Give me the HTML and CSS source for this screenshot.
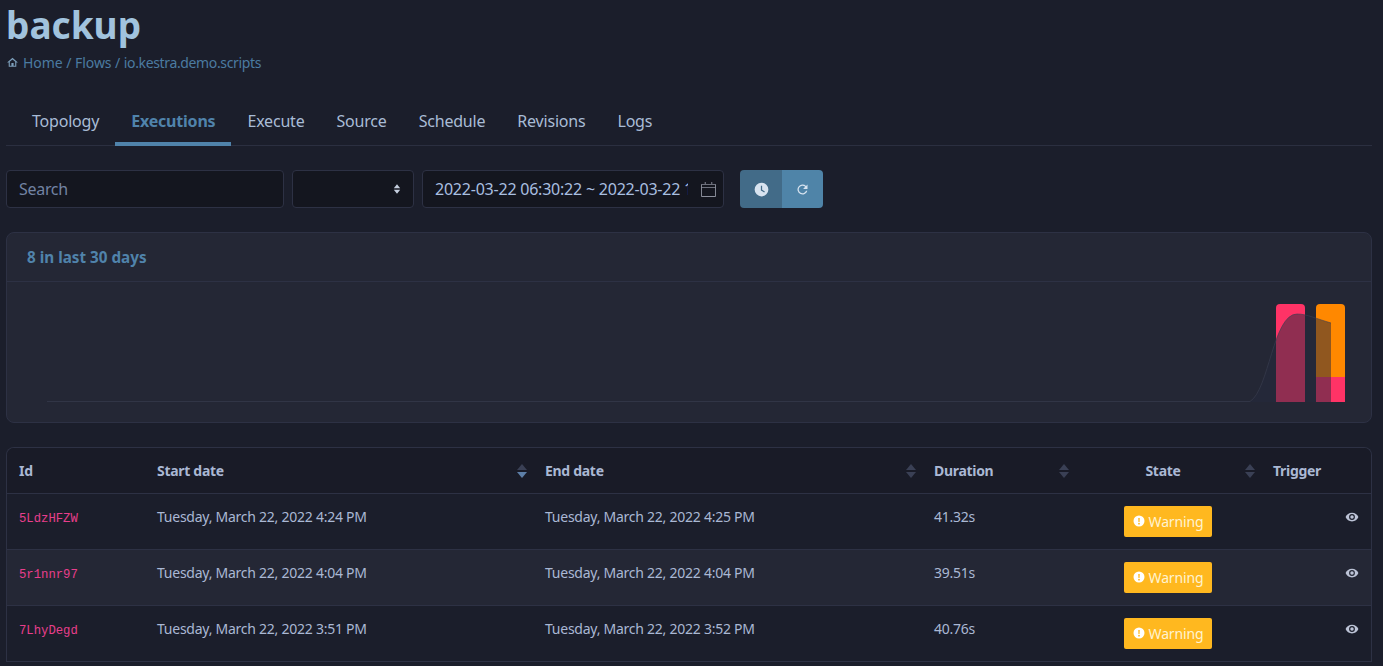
FILE: index.html
```html
<!DOCTYPE html>
<html lang="en">
<head>
    <meta charset="UTF-8">
    <meta name="viewport" content="width=device-width, initial-scale=1.0">
    <title>backup</title>
    <link rel="stylesheet" href="styles.css">
</head>
<body>
<div class="page">
    <h1 class="title">backup</h1>
    <div class="crumbs">
        <svg class="home" viewBox="0 0 24 24"><path d="M12 3 2 12h3v8h14v-8h3L12 3zm-5 15v-7.200l5-4.500 5 4.500V18h-3v-5h-4v5H7z"/></svg>
        <span><a>Home</a> / <a>Flows</a> / <a class="crumb-last">io.kestra.demo.scripts</a></span>
    </div>

    <ul class="tabs">
        <li>Topology</li>
        <li class="active">Executions</li>
        <li>Execute</li>
        <li>Source</li>
        <li>Schedule</li>
        <li>Revisions</li>
        <li>Logs</li>
    </ul>

    <div class="filters">
        <div class="field search">Search</div>
        <div class="field select">
            <svg class="updown" viewBox="0 0 10 14"><path d="M5 1 9 6H1zM5 13 1 8h8z"/></svg>
        </div>
        <div class="field dates">
            <span class="dates-text">2022-03-22 06:30:22 ~ 2022-03-22 16:30:22</span>
            <svg class="cal" viewBox="0 0 16 16"><path d="M4 0h1v2h6V0h1v2h3a1 1 0 0 1 1 1v12a1 1 0 0 1-1 1H1a1 1 0 0 1-1-1V3a1 1 0 0 1 1-1h3V0zM1 3v2.500h14V3H1zm0 3.500V15h14V6.500H1z"/></svg>
        </div>
        <div class="btns">
            <span class="btn dark">
                <svg viewBox="0 0 24 24"><path d="M12 1a11 11 0 1 0 0 22 11 11 0 0 0 0-22zm4.300 15.700L11 13.400V6h2v6.300l4.400 2.700-1.100 1.700z"/></svg>
            </span>
            <span class="btn">
                <svg viewBox="0 0 24 24"><path d="M17.650 6.350A8 8 0 1 0 19.740 14h-2.080a6 6 0 1 1-1.420-6.240L13 11h7V4l-2.350 2.350z"/></svg>
            </span>
        </div>
    </div>

    <div class="card">
        <div class="card-head">8 in last 30 days</div>
        <svg class="chart" viewBox="0 0 1364 140">
            <path d="M1269 26a4 4 0 0 1 4-4h21a4 4 0 0 1 4 4v94h-29z" fill="#ff3366"/>
            <path d="M1309 26a4 4 0 0 1 4-4h21a4 4 0 0 1 4 4v69h-29z" fill="#ff8800"/>
            <rect x="1309" y="95" width="29" height="25" fill="#ff3366"/>
            <path d="M1243 120C1262 108 1266 32 1290 32C1300 32 1310 37 1324 41V120Z" fill="#252a3c" fill-opacity=".51"/>
            <path d="M40 119.500H1243C1262 108 1266 32 1290 32C1300 32 1310 37 1324 41" fill="none" stroke="#3a3f52" stroke-opacity=".6"/>
        </svg>
    </div>

    <div class="table-wrap">
        <table class="runs">
            <colgroup>
                <col class="c-id"><col class="c-start"><col class="c-end"><col class="c-dur"><col class="c-state"><col>
            </colgroup>
            <thead>
                <tr>
                    <th>Id</th>
                    <th>Start date <span class="sort down"></span></th>
                    <th>End date <span class="sort"></span></th>
                    <th>Duration <span class="sort"></span></th>
                    <th class="center"><span class="state-head">State</span> <span class="sort"></span></th>
                    <th>Trigger</th>
                </tr>
            </thead>
            <tbody>
                <tr>
                    <td><code>5LdzHFZW</code></td>
                    <td>Tuesday, March 22, 2022 4:24 PM</td>
                    <td>Tuesday, March 22, 2022 4:25 PM</td>
                    <td>41.32s</td>
                    <td class="center"><span class="badge"><svg viewBox="0 0 24 24"><path d="M12 1a11 11 0 1 0 0 22 11 11 0 0 0 0-22zm-1.500 5h3l-.4 8h-2.200l-.4-8zm1.500 9.500a1.800 1.800 0 1 1 0 3.600 1.800 1.800 0 0 1 0-3.600z"/></svg>Warning</span></td>
                    <td class="right"><svg class="eye" viewBox="0 0 24 24"><path d="M12 4.500C7 4.500 2.700 7.600 1 12c1.700 4.400 6 7.500 11 7.500s9.300-3.100 11-7.500c-1.700-4.400-6-7.500-11-7.500zM12 17a5 5 0 1 1 0-10 5 5 0 0 1 0 10zm0-8a3 3 0 1 0 0 6 3 3 0 0 0 0-6z"/></svg></td>
                </tr>
                <tr>
                    <td><code>5r1nnr97</code></td>
                    <td>Tuesday, March 22, 2022 4:04 PM</td>
                    <td>Tuesday, March 22, 2022 4:04 PM</td>
                    <td>39.51s</td>
                    <td class="center"><span class="badge"><svg viewBox="0 0 24 24"><path d="M12 1a11 11 0 1 0 0 22 11 11 0 0 0 0-22zm-1.500 5h3l-.4 8h-2.200l-.4-8zm1.500 9.500a1.800 1.800 0 1 1 0 3.600 1.800 1.800 0 0 1 0-3.600z"/></svg>Warning</span></td>
                    <td class="right"><svg class="eye" viewBox="0 0 24 24"><path d="M12 4.500C7 4.500 2.700 7.600 1 12c1.700 4.400 6 7.500 11 7.500s9.300-3.100 11-7.500c-1.700-4.400-6-7.500-11-7.500zM12 17a5 5 0 1 1 0-10 5 5 0 0 1 0 10zm0-8a3 3 0 1 0 0 6 3 3 0 0 0 0-6z"/></svg></td>
                </tr>
                <tr>
                    <td><code>7LhyDegd</code></td>
                    <td>Tuesday, March 22, 2022 3:51 PM</td>
                    <td>Tuesday, March 22, 2022 3:52 PM</td>
                    <td>40.76s</td>
                    <td class="center"><span class="badge"><svg viewBox="0 0 24 24"><path d="M12 1a11 11 0 1 0 0 22 11 11 0 0 0 0-22zm-1.500 5h3l-.4 8h-2.200l-.4-8zm1.500 9.500a1.800 1.800 0 1 1 0 3.600 1.800 1.800 0 0 1 0-3.600z"/></svg>Warning</span></td>
                    <td class="right"><svg class="eye" viewBox="0 0 24 24"><path d="M12 4.500C7 4.500 2.700 7.600 1 12c1.700 4.400 6 7.500 11 7.500s9.300-3.100 11-7.500c-1.700-4.400-6-7.500-11-7.500zM12 17a5 5 0 1 1 0-10 5 5 0 0 1 0 10zm0-8a3 3 0 1 0 0 6 3 3 0 0 0 0-6z"/></svg></td>
                </tr>
            </tbody>
        </table>
    </div>
</div>
</body>
</html>
```

FILE: styles.css
```css
*{
    margin: 0;
    padding: 0;
    box-sizing: border-box;
}
html,body{
    height: 666px;
    overflow: hidden;
}
body{
    background: #1b1e2b;
    color: #aab8d4;
    font-family: "Noto Sans", sans-serif;
    font-size: 14px;
    line-height: 21px;
}
.page{
    padding: 0 11px 0 6px;
}
.title{
    font-size: 37px;
    line-height: 50px;
    font-weight: 700;
    color: #a1c3de;
    margin-bottom: 2px;
}
.crumbs{
    color: #4b7ba1;
    font-size: 14px;
    line-height: 21px;
    height: 21px;
    display: flex;
    align-items: center;
    gap: 4px;
    white-space: pre;
    letter-spacing: -0.05px;
}
.crumb-last{
    letter-spacing: -0.36px;
}
.home{
    width: 13px;
    height: 13px;
    fill: #7d9fbb;
}
.tabs{
    list-style: none;
    display: flex;
    margin-top: 27px;
    padding-left: 10px;
    height: 46px;
    border-bottom: 1px solid #2b2f40;
}
.tabs li{
    padding: 0 16px;
    font-size: 16px;
    line-height: 42px;
    height: 46px;
    letter-spacing: -0.2px;
    color: #a9bcd6;
}
.tabs .active{
    color: #5083ab;
    font-weight: 700;
    border-bottom: 4px solid #5083ab;
}
.filters{
    display: flex;
    margin-top: 24px;
    height: 38px;
}
.field{
    background: #14161f;
    border: 1px solid #2d3144;
    border-radius: 4px;
    font-size: 16px;
    line-height: 36px;
    padding: 0 12px;
    margin-right: 8px;
    display: flex;
    align-items: center;
}
.search{
    width: 278px;
    color: #7283a3;
    letter-spacing: -0.3px;
}
.select{
    width: 122px;
    justify-content: flex-end;
}
.updown{
    width: 8px;
    height: 12px;
    fill: #c5cede;
}
.dates{
    width: 302px;
    margin-right: 16px;
    padding-right: 7px;
    gap: 13px;
    color: #a9bfe0;
}
.dates-text{
    flex: 1;
    overflow: hidden;
    white-space: nowrap;
    letter-spacing: -0.22px;
}
.cal{
    width: 15px;
    height: 15px;
    fill: #8b8f9c;
    flex: none;
}
.btns{
    display: flex;
}
.btn{
    width: 41px;
    height: 38px;
    background: #4f84a8;
    border-radius: 0 4px 4px 0;
    display: flex;
    align-items: center;
    justify-content: center;
}
.btn.dark{
    width: 42px;
    background: #426b88;
    border-radius: 4px 0 0 4px;
}
.btn svg{
    width: 15px;
    height: 15px;
    fill: #d7e3f0;
}
.card{
    margin-top: 24px;
    height: 191px;
    background: #242735;
    border: 1px solid #2d3144;
    border-radius: 8px;
}
.card-head{
    height: 49px;
    padding: 0 20px;
    font-size: 15.25px;
    line-height: 48px;
    font-weight: 700;
    color: #5083ab;
    border-bottom: 1px solid #2d3144;
}
.chart{
    display: block;
    width: 1364px;
    height: 140px;
}
.table-wrap{
    margin-top: 24px;
    border: 1px solid #2d3144;
    border-bottom: 0;
    border-radius: 8px 8px 0 0;
    overflow: hidden;
}
.runs{
    width: 100%;
    table-layout: fixed;
    border-collapse: collapse;
}
.c-id{
    width: 138px;
}
.c-start{
    width: 388px;
}
.c-end{
    width: 389px;
}
.c-dur{
    width: 153px;
}
.c-state{
    width: 186px;
}
.runs th{
    position: relative;
    height: 45px;
    padding: 0 12px;
    text-align: left;
    font-weight: 700;
    letter-spacing: -0.3px;
    background: #191b27;
    color: #aab8d4;
    border-bottom: 1px solid #2d3144;
}
.runs th.center{
    text-align: center;
}
.state-head{
    margin-right: 10px;
}
.sort{
    position: absolute;
    right: 6px;
    top: 16px;
    width: 10px;
    height: 14px;
}
.sort::before,.sort::after{
    content: "";
    position: absolute;
    left: 0;
    border-left: 5px solid transparent;
    border-right: 5px solid transparent;
}
.sort::before{
    top: 0;
    border-bottom: 6.5px solid #3a4055;
}
.sort::after{
    bottom: 0;
    border-top: 6.5px solid #3a4055;
}
.sort.down::after{
    border-top-color: #5d7fa8;
}
.runs td{
    height: 56px;
    padding: 12px 12px 0;
    vertical-align: top;
    letter-spacing: -0.25px;
    border-bottom: 1px solid #2d3144;
}
.runs tbody tr:nth-child(even) td{
    background: #242735;
}
.runs td.center{
    text-align: center;
}
.runs td.right{
    text-align: right;
}
code{
    font-family: "Liberation Mono", monospace;
    font-size: 12.25px;
    letter-spacing: 0;
    color: #e83e8c;
}
.badge{
    display: inline-flex;
    align-items: center;
    justify-content: center;
    gap: 4px;
    width: 88px;
    height: 31px;
    background: #ffb81f;
    color: #fff3d0;
    border-radius: 2px;
    vertical-align: top;
    letter-spacing: -0.15px;
}
.badge svg{
    width: 12px;
    height: 12px;
    fill: #fff;
}
.eye{
    width: 14px;
    height: 14px;
    fill: #bcc3d6;
    margin-top: 4px;
    vertical-align: top;
}
```
